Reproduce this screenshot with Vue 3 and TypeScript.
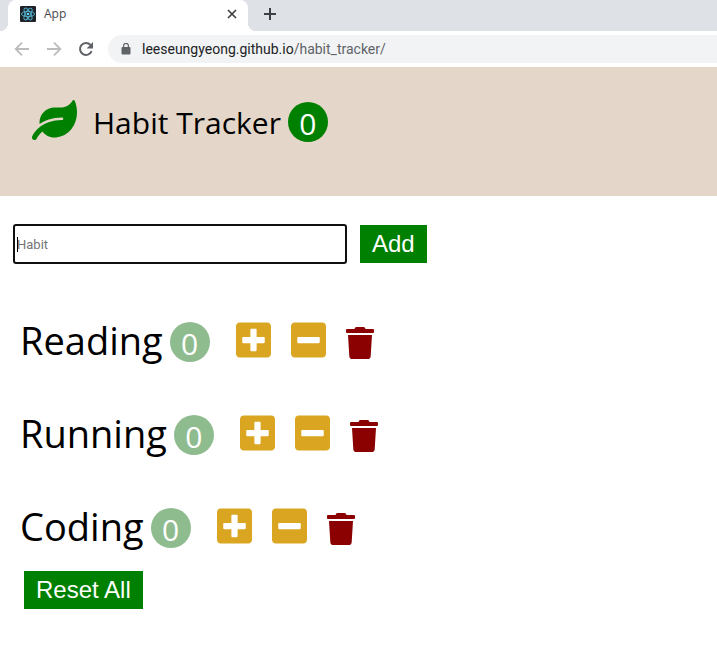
<script setup lang="ts">
import { ref, computed } from 'vue'

interface Habit {
  id: number
  name: string
  count: number
}

const habits = ref<Habit[]>([
  { id: 1, name: 'Reading', count: 0 },
  { id: 2, name: 'Running', count: 0 },
  { id: 3, name: 'Coding', count: 0 },
])
const draft = ref('')
const activeCount = computed(() => habits.value.filter((h) => h.count > 0).length)

function addHabit() {
  const name = draft.value.trim()
  if (!name) return
  habits.value.push({ id: Date.now(), name, count: 0 })
  draft.value = ''
}
function decrement(habit: Habit) {
  habit.count = Math.max(0, habit.count - 1)
}
function remove(habit: Habit) {
  habits.value = habits.value.filter((h) => h.id !== habit.id)
}
function resetAll() {
  habits.value.forEach((h) => (h.count = 0))
}
</script>

<template>
  <div class="window">
    <div class="tabs">
      <div class="tab">
        <svg class="favicon" viewBox="0 0 16 16" aria-hidden="true">
          <rect width="16" height="16" rx="1" fill="#20232a" />
          <g fill="none" stroke="#53b5d0" stroke-width="0.9">
            <ellipse cx="8" cy="8" rx="6.6" ry="2.6" />
            <ellipse cx="8" cy="8" rx="6.6" ry="2.6" transform="rotate(60 8 8)" />
            <ellipse cx="8" cy="8" rx="6.6" ry="2.6" transform="rotate(120 8 8)" />
          </g>
          <circle cx="8" cy="8" r="1.3" fill="#61dafb" />
        </svg>
        <span class="tab-title">App</span>
        <button class="chrome-button close" type="button" aria-label="Close tab">
          <svg width="10" height="10" viewBox="0 0 10 10"><path d="M1 1l8 8M9 1l-8 8" stroke="#3c4043" stroke-width="1.7" /></svg>
        </button>
      </div>
      <button class="chrome-button new-tab" type="button" aria-label="New tab">
        <svg width="12" height="12" viewBox="0 0 12 12"><path d="M6 0v12M0 6h12" stroke="#3c4043" stroke-width="2" /></svg>
      </button>
    </div>
    <div class="toolbar">
      <button class="chrome-button" type="button" aria-label="Back">
        <svg width="16" height="16" viewBox="0 0 16 16"><path d="M15 8H2M8 1.7L1.7 8 8 14.3" fill="none" stroke="#babcbe" stroke-width="1.8" /></svg>
      </button>
      <button class="chrome-button" type="button" aria-label="Forward">
        <svg width="16" height="16" viewBox="0 0 16 16"><path d="M1 8h13M8 1.7L14.3 8 8 14.3" fill="none" stroke="#babcbe" stroke-width="1.8" /></svg>
      </button>
      <button class="chrome-button" type="button" aria-label="Reload">
        <svg width="16" height="16" viewBox="0 0 16 16">
          <path d="M13.6 10.2A6 6 0 1 1 12.5 4" fill="none" stroke="#5f6368" stroke-width="2" />
          <path d="M15 1v6.4H8.6z" fill="#5f6368" />
        </svg>
      </button>
      <div class="address">
        <svg width="10" height="12" viewBox="0 0 10 12" aria-hidden="true">
          <rect x="0.5" y="4" width="9" height="7.5" rx="1" fill="#5f6368" />
          <path d="M2.6 4.5V2.8a2.4 2.4 0 0 1 4.8 0v1.7" fill="none" stroke="#5f6368" stroke-width="1.2" />
        </svg>
        <span>leeseungyeong.github.io<span class="path">/habit_tracker/</span></span>
      </div>
    </div>

    <header class="banner">
      <svg class="leaf" viewBox="0 0 576 512" aria-hidden="true">
        <path fill="currentColor" d="M546.2 9.7c-5.6-12.5-21.6-13-28.3-1.2C486.9 62.4 431.4 96 368 96h-80C182 96 96 182 96 288c0 7 .8 13.7 1.5 20.5C161.3 262.8 253.4 224 384 224c8.8 0 16 7.2 16 16s-7.2 16-16 16C132.6 256 26 410.1 2.4 468c-6.6 16.3 1.2 34.9 17.5 41.6 16.4 6.8 35-1.1 41.8-17.3 1.5-3.6 20.9-47.9 71.9-90.6 32.4 43.9 94 85.8 174.9 77.2C465.5 467.5 576 326.7 576 154.3c0-50.2-10.8-102.2-29.8-144.6z" />
      </svg>
      <h1 class="title">Habit Tracker</h1>
      <span class="badge total">{{ activeCount }}</span>
    </header>

    <main>
      <form class="add-form" @submit.prevent="addHabit">
        <div class="field">
          <input v-model="draft" class="habit-input" type="text" placeholder="Habit" aria-label="Habit" />
          <span class="caret"></span>
        </div>
        <button class="green-button" type="submit">Add</button>
      </form>

      <ul class="habits">
        <li v-for="habit in habits" :key="habit.id" class="habit">
          <span class="name">{{ habit.name }}</span>
          <span class="badge">{{ habit.count }}</span>
          <div class="actions">
            <button class="icon-button" type="button" aria-label="Increase" @click="habit.count++">
              <svg width="35" height="40" viewBox="0 0 448 512"><path fill="currentColor" d="M400 32H48C21.5 32 0 53.5 0 80v352c0 26.5 21.5 48 48 48h352c26.5 0 48-21.5 48-48V80c0-26.5-21.5-48-48-48zm-32 252c0 6.6-5.4 12-12 12h-92v92c0 6.6-5.4 12-12 12h-56c-6.6 0-12-5.4-12-12v-92H92c-6.6 0-12-5.4-12-12v-56c0-6.6 5.4-12 12-12h92v-92c0-6.6 5.4-12 12-12h56c6.6 0 12 5.4 12 12v92h92c6.6 0 12 5.4 12 12v56z" /></svg>
            </button>
            <button class="icon-button" type="button" aria-label="Decrease" @click="decrement(habit)">
              <svg width="35" height="40" viewBox="0 0 448 512"><path fill="currentColor" d="M400 32H48C21.5 32 0 53.5 0 80v352c0 26.5 21.5 48 48 48h352c26.5 0 48-21.5 48-48V80c0-26.5-21.5-48-48-48zM92 296c-6.6 0-12-5.4-12-12v-56c0-6.6 5.4-12 12-12h264c6.6 0 12 5.4 12 12v56c0 6.6-5.4 12-12 12H92z" /></svg>
            </button>
            <button class="icon-button delete" type="button" aria-label="Delete" @click="remove(habit)">
              <svg width="28" height="32" viewBox="0 0 448 512"><path fill="currentColor" d="M432 32H312l-9.4-18.7A24 24 0 0 0 281.1 0H166.8a23.72 23.72 0 0 0-21.4 13.3L136 32H16A16 16 0 0 0 0 48v32a16 16 0 0 0 16 16h416a16 16 0 0 0 16-16V48a16 16 0 0 0-16-16zM53.2 467a48 48 0 0 0 47.9 45h245.8a48 48 0 0 0 47.9-45L416 128H32z" /></svg>
            </button>
          </div>
        </li>
      </ul>
      <button class="green-button reset" type="button" @click="resetAll">Reset All</button>
    </main>
  </div>
</template>

<style>
body {
  background: #fff;
}
</style>

<style scoped>
.window {
  font-family: 'Open Sans', 'Noto Sans', sans-serif;
  color: #000;
}
button {
  border: 0;
  cursor: pointer;
}
svg {
  display: block;
}
.tabs {
  display: flex;
  height: 31px;
  padding-left: 8px;
  background: #dee1e6;
}
.tab {
  position: relative;
  display: flex;
  align-items: center;
  box-sizing: border-box;
  width: 240px;
  padding: 0 11px 3px 12px;
  background: #fff;
  border-radius: 8px 8px 0 0;
}
.tab::before,
.tab::after {
  content: '';
  position: absolute;
  bottom: 0;
  width: 8px;
  height: 8px;
}
.tab::before {
  right: 100%;
  background: radial-gradient(circle at 0 0, #dee1e6 8px, #fff 8px);
}
.tab::after {
  left: 100%;
  background: radial-gradient(circle at 100% 0, #dee1e6 8px, #fff 8px);
}
.favicon {
  width: 16px;
  height: 16px;
}
.tab-title {
  flex: 1;
  margin-left: 8px;
  font-size: 12px;
  line-height: 16px;
  color: #45494d;
}
.chrome-button {
  padding: 0;
  background: none;
}
.new-tab {
  margin-left: 16px;
  padding-bottom: 3px;
}
.toolbar {
  display: flex;
  align-items: center;
  gap: 16px;
  height: 36px;
  padding-left: 14px;
  background: #fff;
}
.address {
  flex: 1;
  display: flex;
  align-items: center;
  gap: 11px;
  margin-left: -2px;
  padding-left: 13px;
  height: 28px;
  border-radius: 14px 0 0 14px;
  background: #f1f3f4;
  font-family: Roboto, 'Noto Sans', sans-serif;
  font-size: 14px;
  line-height: 20px;
  color: #202124;
}
.path {
  color: #5f6368;
}
.banner {
  display: flex;
  align-items: flex-end;
  padding: 33px 32px 54px;
  background: #e4d6c9;
}
.leaf {
  width: 45px;
  height: 40px;
  margin-bottom: 2px;
  color: green;
}
.title {
  margin: 0 7px 0 16px;
  font-size: 30px;
  font-weight: 400;
  line-height: 38px;
}
.badge {
  display: flex;
  align-items: center;
  justify-content: center;
  box-sizing: border-box;
  width: 40px;
  height: 40px;
  padding-top: 3px;
  border-radius: 50%;
  background: darkseagreen;
  color: #fff;
  font-size: 30px;
  line-height: 36px;
}
.total {
  background: green;
}
main {
  padding: 28px 13px;
}
.add-form {
  display: flex;
  align-items: center;
  gap: 13px;
}
.field {
  position: relative;
}
.habit-input {
  display: block;
  box-sizing: border-box;
  width: 334px;
  height: 40px;
  padding: 0 2px;
  border: 2px solid #101010;
  border-radius: 3px;
  outline: 0;
  font-family: Roboto, Arial, sans-serif;
  font-size: 13px;
}
.habit-input::placeholder {
  color: #757575;
}
.caret {
  position: absolute;
  top: 13px;
  left: 4px;
  width: 1px;
  height: 15px;
  background: #000;
}
.green-button {
  padding: 5px 12px;
  background: green;
  color: #fff;
  font-family: 'Liberation Sans', Arial, sans-serif;
  font-size: 24px;
  line-height: 28px;
}
.habits {
  display: grid;
  gap: 37px;
  margin: 50px 0 0;
  padding: 0 0 0 7px;
  list-style: none;
}
.habit {
  display: flex;
  align-items: center;
  height: 56px;
}
.name {
  margin-right: 7px;
  padding-bottom: 4px;
  font-size: 38px;
  line-height: 52px;
}
.actions {
  display: flex;
  align-items: center;
  gap: 20px;
  margin-left: 26px;
}
.icon-button {
  padding: 0 0 4px;
  background: none;
  color: goldenrod;
}
.delete {
  padding: 2px 0 0;
  color: darkred;
}
.reset {
  margin: 15px 11px 0;
}
</style>
